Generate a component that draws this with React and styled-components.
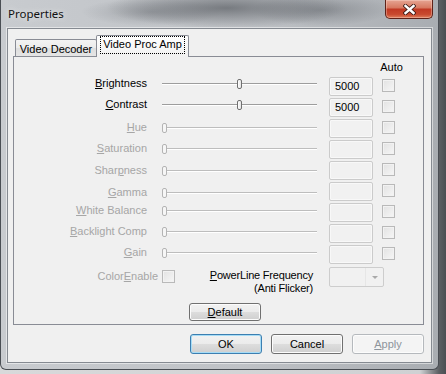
import React from 'react'
import styled, { createGlobalStyle } from 'styled-components'

const GlobalStyle = createGlobalStyle`
  html, body { margin: 0; padding: 0; }
  body {
    font-family: "Liberation Sans", Arial, sans-serif;
    font-size: 11px;
    color: #000;
  }
  u { text-underline-offset: 1px; }
`

const Page = styled.div`
  width: 446px;
  height: 374px;
  overflow: hidden;
  display: flex;
  align-items: flex-start;
  background: linear-gradient(90deg, #d8d9da 0, #cfd1d3 420px, #5c5f63 439px, #4b4e52 100%);
`

const Window = styled.div`
  width: 439px;
  height: 370px;
  box-sizing: border-box;
  border: 1px solid #4a4e54;
  border-top: none;
  border-radius: 0 0 6px 6px;
  display: flex;
  flex-direction: column;
  background:
    radial-gradient(ellipse 120px 20px at 225px 8px, rgba(70, 74, 80, 0.6), transparent),
    radial-gradient(ellipse 70px 16px at 320px 10px, rgba(90, 94, 100, 0.45), transparent),
    radial-gradient(ellipse 70px 14px at 150px 12px, rgba(110, 114, 120, 0.4), transparent),
    linear-gradient(90deg, #c8cbcf 0%, #bfc2c6 55%, #a9adb2 100%);
`

const TitleBar = styled.div`
  height: 28px;
  flex: 0 0 28px;
  display: flex;
  align-items: flex-start;
  justify-content: space-between;
  padding-left: 7px;
  box-sizing: border-box;
`

const Title = styled.div`
  font-family: "Noto Sans", "Liberation Sans", sans-serif;
  font-size: 11.5px;
  line-height: 16px;
  margin-top: 6px;
  color: #111;
  text-shadow: 0 0 6px rgba(255, 255, 255, 0.8);
`

const CloseButton = styled.div`
  width: 48px;
  height: 19px;
  margin-right: 5px;
  box-sizing: border-box;
  border: 1px solid #5e2218;
  border-top: none;
  border-radius: 0 0 5px 5px;
  background: linear-gradient(#e6a593 0%, #d77a62 42%, #c13a24 52%, #c84a2f 80%, #df7f5c 100%);
  box-shadow: inset 0 0 0 1px rgba(255, 230, 220, 0.35);
  display: flex;
  align-items: center;
  justify-content: center;
`

const Client = styled.div`
  width: 425px;
  height: 335px;
  margin: 0 6px 6px 6px;
  box-sizing: border-box;
  border: 1px solid #858a91;
  box-shadow: 0 0 0 1px rgba(255, 255, 255, 0.5);
  background: #f0f0f0;
  padding: 6px 7px 0 5px;
  display: flex;
  flex-direction: column;
`

const TabStrip = styled.div`
  height: 21px;
  display: flex;
  align-items: flex-end;
  padding-left: 2px;
  position: relative;
  z-index: 1;
`

const Tab = styled.div`
  box-sizing: border-box;
  width: ${p => (p.$active ? 93 : 82)}px;
  height: ${p => (p.$active ? 22 : 17)}px;
  margin-left: ${p => (p.$active ? -1 : 0)}px;
  margin-bottom: ${p => (p.$active ? -1 : 0)}px;
  border: 1px solid #898c95;
  border-bottom: none;
  border-radius: 2px 2px 0 0;
  background: ${p => (p.$active
    ? 'linear-gradient(#ffffff, #f6f6f6 60%, #f0f0f0)'
    : 'linear-gradient(#f3f3f3, #ebebeb 50%, #dedede 51%, #e5e5e5)')};
  display: flex;
  align-items: ${p => (p.$active ? 'flex-start' : 'center')};
  justify-content: center;
  padding-top: 1px;
  white-space: nowrap;
`

const FocusText = styled.span`
  outline: 1px dotted #000;
  outline-offset: 0;
  padding: 1px 2px 2px 2px;
  line-height: 13px;
`

const Panel = styled.div`
  height: 269px;
  box-sizing: border-box;
  border: 1px solid #898c95;
  background: #f0f0f0;
  display: flex;
  flex-direction: column;
`

const Grid = styled.div`
  display: grid;
  grid-template-columns: 136px 155px 44px 13px;
  grid-auto-rows: 21px;
  grid-template-rows: 19px;
  column-gap: 12px;
  align-items: center;
`

const AutoHead = styled.div`
  grid-column: 4;
  justify-self: center;
  align-self: end;
  margin-bottom: 2px;
  line-height: 13px;
  white-space: nowrap;
`

const Label = styled.div`
  text-align: right;
  padding-right: 3px;
  line-height: 13px;
  white-space: nowrap;
  color: ${p => (p.$disabled ? '#a6a6a6' : '#000')};
  transform: translateY(${p => p.$shift || 0}px);
`

const Slider = styled.div`
  position: relative;
  height: 10px;
  transform: translateY(${p => p.$shift || 0}px);

  &::before {
    content: '';
    position: absolute;
    left: 0;
    right: 0;
    top: 4px;
    height: 1px;
    background: ${p => (p.$disabled ? '#bdbdbd' : '#9d9d9d')};
    border-bottom: 1px solid #ffffff;
  }
`

const Thumb = styled.div`
  position: absolute;
  top: 0;
  width: 5px;
  height: 10px;
  box-sizing: border-box;
  border: 1px solid ${p => (p.$disabled ? '#b4b4b4' : '#707070')};
  border-radius: 2px;
  background: ${p => (p.$disabled ? '#f6f6f6' : 'linear-gradient(90deg, #ffffff, #e4e4e4)')};
`

const ValueBox = styled.div`
  height: 19px;
  box-sizing: border-box;
  border: 1px solid #cbcbcb;
  border-radius: 2px;
  background: #f1f1f1;
  box-shadow: inset 0 0 0 1px #f8f8f8;
  padding-left: 5px;
  line-height: 17px;
  color: #000;
`

const Check = styled.div`
  width: 13px;
  height: 13px;
  box-sizing: border-box;
  border: 1px solid #b9b9b9;
  background: linear-gradient(135deg, #e2e2e2, #f6f6f6);
  box-shadow: inset 0 0 0 1px #f2f2f2;
  transform: translateY(-1px);
  margin-left: ${p => p.$left || 0}px;
  margin-top: ${p => p.$top || 0}px;
`

const GridCheck = styled(Check)`
  margin-left: -3px;
`

const BottomRow = styled.div`
  display: flex;
  align-items: flex-start;
  height: 30px;
`

const ColorLabel = styled.div`
  width: 144px;
  text-align: right;
  line-height: 13px;
  margin-top: 5px;
  color: #a6a6a6;
  white-space: nowrap;
`

const PowerLabel = styled.div`
  width: 138px;
  text-align: right;
  line-height: 13px;
  margin-top: 4px;
  white-space: nowrap;
  letter-spacing: -0.2px;
`

const Combo = styled.div`
  width: 55px;
  height: 20px;
  margin-left: 16px;
  margin-top: 2px;
  box-sizing: border-box;
  border: 1px solid #cdcdcd;
  border-radius: 2px;
  background: #f1f1f1;
  display: flex;
  justify-content: flex-end;
  align-items: center;
`

const ComboArrow = styled.div`
  width: 17px;
  height: 100%;
  border-left: 1px solid #e6e6e6;
  display: flex;
  align-items: center;
  justify-content: center;

  &::after {
    content: '';
    border-left: 3px solid transparent;
    border-right: 3px solid transparent;
    border-top: 3px solid #a9a9a9;
  }
`

const Button = styled.div`
  width: 72px;
  height: ${p => p.$h || 20}px;
  box-sizing: border-box;
  border: 1px solid ${p => (p.$default ? '#3c7fb1' : p.$disabled ? '#b5b9bd' : '#707070')};
  border-radius: 3px;
  background: ${p => (p.$disabled
    ? '#f4f4f4'
    : 'linear-gradient(#f2f2f2 0%, #ebebeb 50%, #dddddd 51%, #cfcfcf 100%)')};
  box-shadow: inset 0 0 0 1px ${p => (p.$default ? '#a6dcf6' : '#fcfcfc')};
  color: ${p => (p.$disabled ? '#8e959c' : '#000')};
  display: flex;
  align-items: center;
  justify-content: center;
  line-height: 13px;
`

const DefaultRow = styled.div`
  padding-left: 175px;
  margin-top: 8px;
`

const ButtonRow = styled.div`
  display: flex;
  justify-content: flex-end;
  gap: 9px;
  margin-top: 9px;
`

const rows = [
  { label: <><u>B</u>rightness</>, value: 5000, shift: -3 },
  { label: <><u>C</u>ontrast</>, value: 5000, shift: -3 },
  { label: <><u>H</u>ue</>, shift: -1 },
  { label: <><u>S</u>aturation</>, shift: -1 },
  { label: <>Shar<u>p</u>ness</>, shift: 0 },
  { label: <><u>G</u>amma</>, shift: 1 },
  { label: <><u>W</u>hite Balance</>, shift: -2 },
  { label: <><u>B</u>acklight Comp</>, shift: -2 },
  { label: <><u>G</u>ain</>, shift: -2 },
]

function CloseGlyph() {
  return (
    <svg width="13" height="11" viewBox="0 0 13 11">
      <path d="M2.5 2 L10.5 9 M10.5 2 L2.5 9" stroke="#3b1a15" strokeWidth="4.2" strokeLinecap="square" />
      <path d="M2.5 2 L10.5 9 M10.5 2 L2.5 9" stroke="#ffffff" strokeWidth="2.4" strokeLinecap="square" />
    </svg>
  )
}

function SliderRow({ row }) {
  const disabled = row.value === undefined
  const pos = disabled ? 0 : Math.round((row.value / 10000) * 150)
  return (
    <>
      <Label $disabled={disabled} $shift={row.shift}>{row.label}</Label>
      <Slider $disabled={disabled} $shift={row.shift}>
        <Thumb $disabled={disabled} style={{ left: pos }} />
      </Slider>
      <ValueBox>{disabled ? '' : row.value}</ValueBox>
      <GridCheck />
    </>
  )
}

export default function App() {
  return (
    <Page>
      <GlobalStyle />
      <Window>
        <TitleBar>
          <Title>Properties</Title>
          <CloseButton><CloseGlyph /></CloseButton>
        </TitleBar>
        <Client>
          <TabStrip>
            <Tab>Video Decoder</Tab>
            <Tab $active><FocusText>Video Proc Amp</FocusText></Tab>
          </TabStrip>
          <Panel>
            <Grid>
              <AutoHead>Auto</AutoHead>
              {rows.map((r, i) => <SliderRow key={i} row={r} />)}
            </Grid>
            <BottomRow>
              <ColorLabel>Color<u>E</u>nable</ColorLabel>
              <Check $left={4} $top={6} />
              <PowerLabel><u>P</u>owerLine Frequency<br />(Anti Flicker)</PowerLabel>
              <Combo><ComboArrow /></Combo>
            </BottomRow>
            <DefaultRow>
              <Button $h={18}><span><u>D</u>efault</span></Button>
            </DefaultRow>
          </Panel>
          <ButtonRow>
            <Button $default>OK</Button>
            <Button>Cancel</Button>
            <Button $disabled><span><u>A</u>pply</span></Button>
          </ButtonRow>
        </Client>
      </Window>
    </Page>
  )
}
